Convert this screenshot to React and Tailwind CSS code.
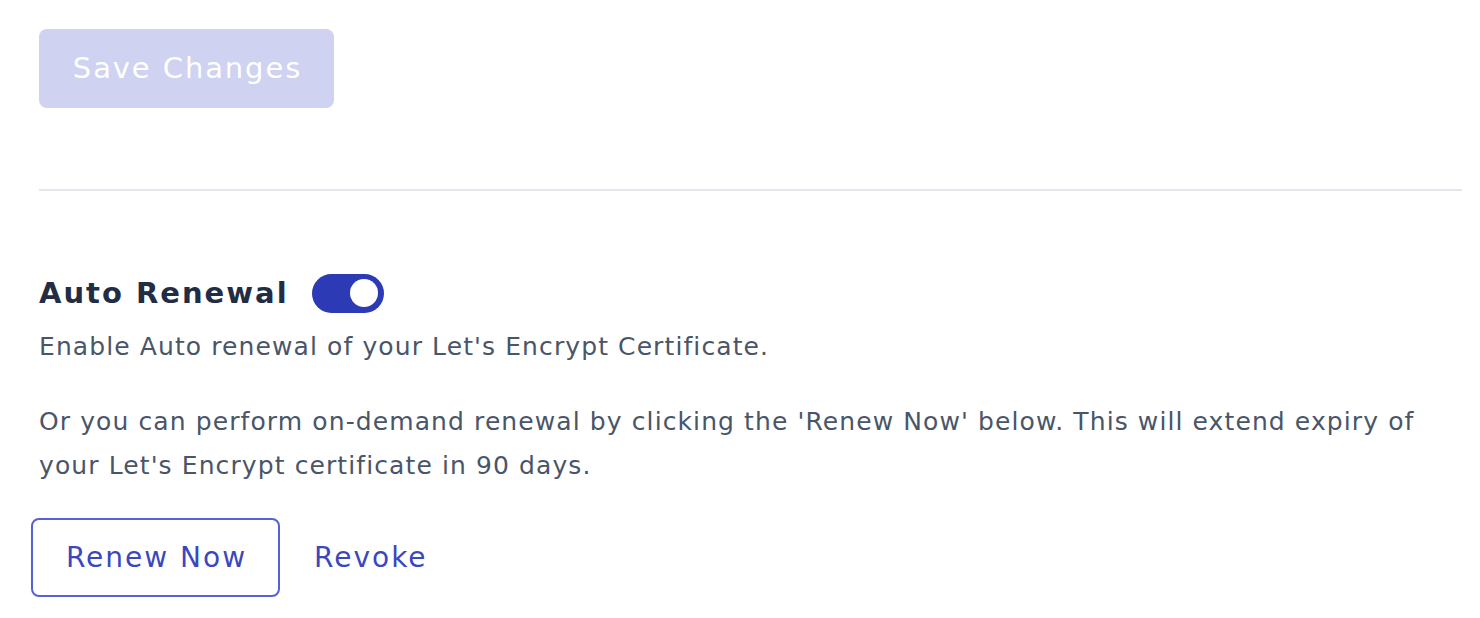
export default function App() {
  return (
    <div className="min-h-screen bg-white pl-[39px] pr-[18px] pt-[29px] font-['DejaVu_Sans',sans-serif]">
      <button
        disabled
        className="flex h-[79px] w-[295px] items-center justify-center rounded-[8px] bg-[#cfd2f0] pl-[2px] text-[29px] font-medium tracking-[1.9px] text-white"
      >
        Save Changes
      </button>
      <div className="mt-[81px] h-[2px] w-full bg-[#e6e6ec]" />
      <div className="mt-[82px] flex items-center gap-[23px]">
        <h2 className="text-[29px] font-semibold leading-[40px] tracking-[2px] text-[#222c44]">Auto Renewal</h2>
        <button className="relative h-[39px] w-[72px] rounded-full bg-[#2c3ab6]">
          <span className="absolute right-[6px] top-[5.5px] h-[28px] w-[28px] rounded-full bg-white" />
        </button>
      </div>
      <p className="mt-[12px] text-[25px] leading-[44px] tracking-[1.1px] text-[#4a5568]">
        Enable Auto renewal of your Let's Encrypt Certificate.
      </p>
      <p className="mt-[31px] text-[25px] leading-[44px] tracking-[1.1px] text-[#4a5568]">
        Or you can perform on-demand renewal by clicking the 'Renew Now' below. This will extend expiry of your Let's Encrypt certificate in 90 days.
      </p>
      <div className="-ml-[8px] mt-[30px] flex items-center">
        <button className="flex h-[79px] w-[249px] items-center justify-center rounded-[8px] border-2 border-[#5662d4] pl-[2px] text-[28px] tracking-[2px] text-[#3a47bf]">
          Renew Now
        </button>
        <button className="ml-[34px] text-[28px] tracking-[2px] text-[#3a47bf]">Revoke</button>
      </div>
    </div>
  );
}
